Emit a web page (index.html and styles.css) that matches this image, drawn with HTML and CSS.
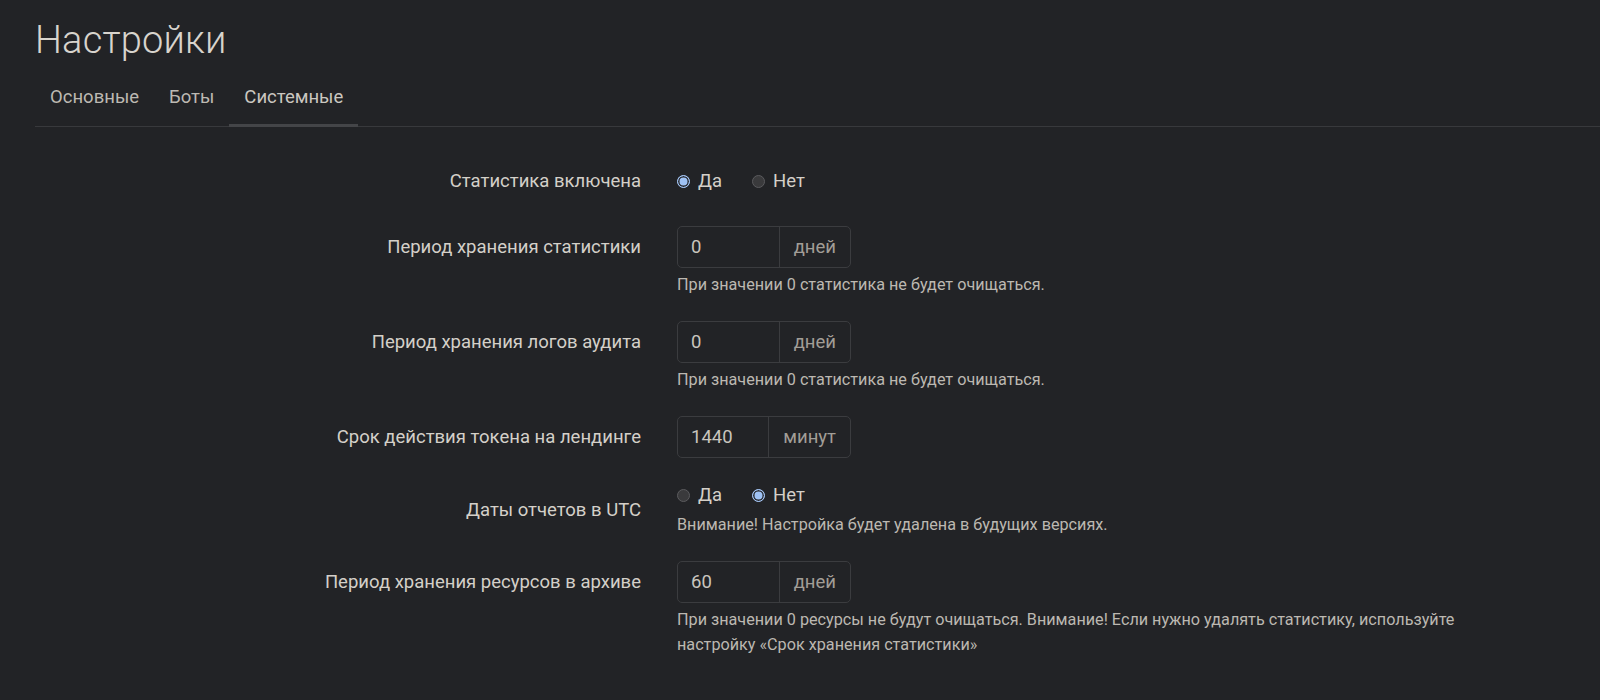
FILE: index.html
```html
<!DOCTYPE html>
<html lang="ru">
<head>
<meta charset="utf-8">
<title>Настройки</title>
<link rel="stylesheet" href="styles.css">
</head>
<body>
<div class="page">
  <h1 class="title">Настройки</h1>
  <nav class="tabs">
    <a class="tab">Основные</a>
    <a class="tab">Боты</a>
    <a class="tab tab--active">Системные</a>
  </nav>
  <form class="form">
    <div class="row">
      <div class="label">Статистика включена</div>
      <div class="control">
        <div class="radios radios--tall">
          <label class="radio"><span class="dot dot--on"></span>Да</label>
          <label class="radio"><span class="dot"></span>Нет</label>
        </div>
      </div>
    </div>

    <div class="row">
      <div class="label">Период хранения статистики</div>
      <div class="control">
        <div class="group"><span class="input">0</span><span class="addon">дней</span></div>
        <div class="help">При значении 0 статистика не будет очищаться.</div>
      </div>
    </div>

    <div class="row">
      <div class="label">Период хранения логов аудита</div>
      <div class="control">
        <div class="group"><span class="input">0</span><span class="addon">дней</span></div>
        <div class="help">При значении 0 статистика не будет очищаться.</div>
      </div>
    </div>

    <div class="row">
      <div class="label">Срок действия токена на лендинге</div>
      <div class="control">
        <div class="group"><span class="input">1440</span><span class="addon">минут</span></div>
      </div>
    </div>

    <div class="row row--center">
      <div class="label label--free">Даты отчетов в UTC</div>
      <div class="control">
        <div class="radios">
          <label class="radio"><span class="dot"></span>Да</label>
          <label class="radio"><span class="dot dot--on"></span>Нет</label>
        </div>
        <div class="help">Внимание! Настройка будет удалена в будущих версиях.</div>
      </div>
    </div>

    <div class="row">
      <div class="label">Период хранения ресурсов в архиве</div>
      <div class="control">
        <div class="group"><span class="input">60</span><span class="addon">дней</span></div>
        <div class="help">При значении 0 ресурсы не будут очищаться. Внимание! Если нужно удалять статистику, используйте<br>настройку «Срок хранения статистики»</div>
      </div>
    </div>
  </form>
</div>
</body>
</html>
```

FILE: styles.css
```css
* { box-sizing: border-box; }

html, body {
  margin: 0;
  background: #222326;
}

body {
  font-family: Roboto, "Liberation Sans", sans-serif;
  color: #d4d0c9;
  -webkit-font-smoothing: antialiased;
}

.page {
  padding: 0 0 0 35px;
}

.title {
  margin: 0;
  padding-top: 17px;
  font-size: 38px;
  line-height: 46px;
  font-weight: 300;
  color: #d8d4cd;
  letter-spacing: 0.2px;
}

.tabs {
  display: flex;
  margin-top: 12px;
  border-bottom: 1px solid #38393c;
}

.tab {
  display: block;
  padding: 0 15px 5px 15px;
  line-height: 44px;
  font-size: 18.5px;
  color: #bdb9b2;
  border-bottom: 3px solid transparent;
  margin-bottom: -1px;
}

.tab--active {
  border-bottom-color: #444548;
  color: #cbc7c0;
}

.form {
  padding-top: 33px;
}

.row {
  display: grid;
  grid-template-columns: 606px 1fr;
  column-gap: 36px;
  margin-bottom: 24px;
  align-items: start;
}

.row--center {
  align-items: center;
}

.label {
  height: 42px;
  display: flex;
  align-items: center;
  justify-content: flex-end;
  font-size: 18.5px;
  color: #d4d0c9;
  white-space: nowrap;
}

.label--free {
  height: auto;
}

.control {
  display: flex;
  flex-direction: column;
  align-items: flex-start;
}

.radios {
  display: flex;
  align-items: center;
  height: 26px;
  gap: 30px;
}

.radios--tall {
  height: 42px;
}

.radio {
  display: flex;
  align-items: center;
  gap: 8px;
  font-size: 18.5px;
  color: #d4d0c9;
}

.dot {
  width: 13px;
  height: 13px;
  border-radius: 50%;
  background: #3a3a3c;
  border: 1px solid #5b5b5e;
  flex: none;
}

.dot--on {
  background: #9fc2f4;
  border: 1.5px solid #a9cafa;
  box-shadow: inset 0 0 0 1.5px #2a2d33;
}

.group {
  display: flex;
  width: 174px;
  height: 42px;
  border: 1px solid #3b3c3f;
  border-radius: 5px;
}

.input {
  flex: 1;
  display: flex;
  align-items: center;
  padding-left: 13px;
  font-size: 18.5px;
  color: #c9c5be;
}

.addon {
  display: flex;
  align-items: center;
  padding: 0 14px 0 14px;
  border-left: 1px solid #3b3c3f;
  font-size: 18.5px;
  color: #a29e97;
}

.help {
  margin-top: 4px;
  font-size: 16.2px;
  line-height: 25px;
  color: #bcb8b1;
  white-space: nowrap;
}
```
